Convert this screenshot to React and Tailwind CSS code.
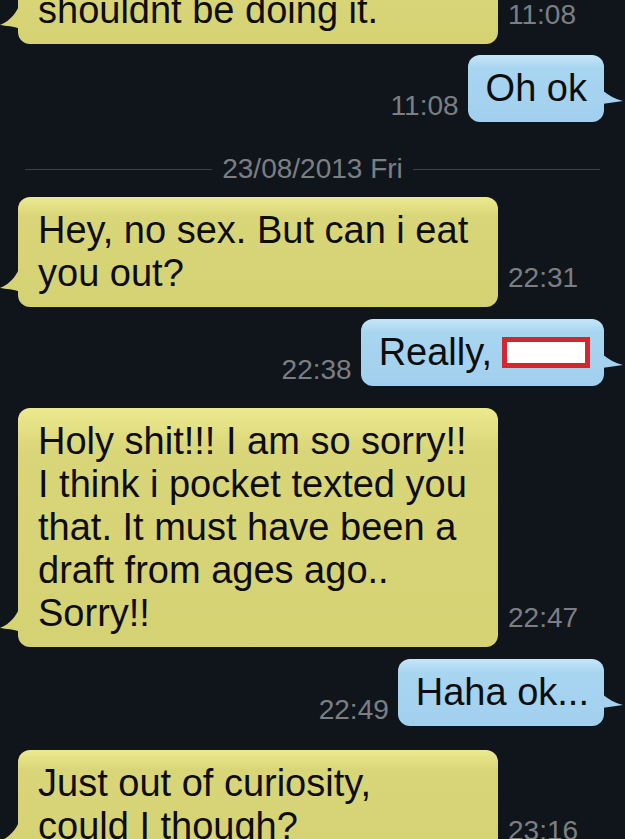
import React from "react";

function YellowTail() {
  return (
    <svg
      className="absolute left-[-18px] bottom-[14px]"
      width="20"
      height="28"
      viewBox="0 0 20 28"
    >
      <path d="M20 0 C18 10 10 19 0 23 C6 24 14 24 20 27 Z" fill="#d6d375" />
    </svg>
  );
}

function BlueTail() {
  return (
    <svg
      className="absolute right-[-19px] bottom-[18px]"
      width="21"
      height="14"
      viewBox="0 0 21 14"
    >
      <path d="M0 0 C6 5 13 9 21 11 L0 14 Z" fill="#a3d1ee" />
    </svg>
  );
}

function Incoming({ lines, time, className = "" }) {
  return (
    <div className={"flex items-end " + className}>
      <div className="relative w-[480px] rounded-[12px] bg-linear-to-b from-[#ecea8e] via-[#d9d679] via-[18%] to-[#d5d274] px-[20px] py-[12px] text-[38px] leading-[43px] text-[#0d0d0d]">
        {lines.map((l, i) => (
          <div key={i} className="whitespace-nowrap">
            {l}
          </div>
        ))}
        <YellowTail />
      </div>
      <span className="ml-[10px] mb-[13px] text-[28px] leading-[32px] text-[#7b7f83]">
        {time}
      </span>
    </div>
  );
}

function Outgoing({ children, time, className = "", pr = "pr-[17px]" }) {
  return (
    <div className={"flex items-end justify-end " + className}>
      <span className="mr-[9px] text-[28px] leading-[32px] text-[#7b7f83]">
        {time}
      </span>
      <div
        className={
          "relative flex items-center rounded-[12px] bg-linear-to-b from-[#c6e6f8] via-[#a8d5f0] via-[20%] to-[#a1d0ee] pl-[18px] py-[12px] text-[38px] leading-[43px] text-[#0d0d0d] " +
          pr
        }
      >
        {children}
        <BlueTail />
      </div>
    </div>
  );
}

export default function App() {
  return (
    <div className="h-[839px] overflow-hidden bg-[#10151b] font-['Liberation_Sans',Arial,sans-serif]">
      <div className="flex flex-col pl-[18px] pr-[21px]">
        <Incoming
          className="mt-[-23px]"
          lines={["shouldnt be doing it."]}
          time="11:08"
        />
        <Outgoing className="mt-[11px]" time="11:08">
          <span>Oh ok</span>
        </Outgoing>

        <div className="mt-[31px] flex items-center gap-[10px] pl-[7px] pr-[4px]">
          <div className="h-px flex-1 bg-[#3a4046]" />
          <span className="text-[28px] leading-[32px] text-[#7b7f83]">
            23/08/2013 Fri
          </span>
          <div className="h-px flex-1 bg-[#3a4046]" />
        </div>

        <Incoming
          className="mt-[12px]"
          lines={["Hey, no sex. But can i eat", "you out?"]}
          time="22:31"
        />
        <Outgoing className="mt-[12px]" time="22:38" pr="pr-[14px]">
          <span>Really,</span>
          <span className="ml-[10px] inline-block h-[31px] w-[88px] border-[5px] border-[#d3262f] bg-white" />
        </Outgoing>

        <Incoming
          className="mt-[22px]"
          lines={[
            "Holy shit!!! I am so sorry!!",
            "I think i pocket texted you",
            "that. It must have been a",
            "draft from ages ago..",
            "Sorry!!",
          ]}
          time="22:47"
        />
        <Outgoing className="mt-[12px]" time="22:49" pr="pr-[15px]">
          <span>Haha ok...</span>
        </Outgoing>

        <Incoming
          className="mt-[24px]"
          lines={["Just out of curiosity,", "could I though?"]}
          time="23:16"
        />
      </div>
    </div>
  );
}
